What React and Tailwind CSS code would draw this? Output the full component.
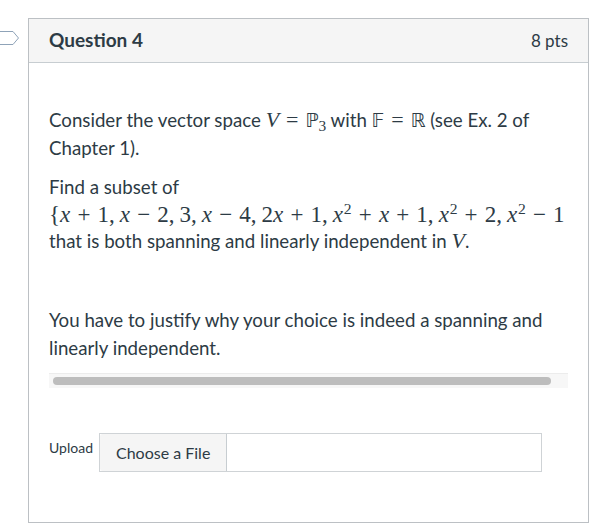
import React from 'react';

// KaTeX-ish pieces
const M = ({ children, className = '' }) => (
  <span className={`font-['Liberation_Serif','DejaVu_Serif',serif] ${className}`}>{children}</span>
);
const I = ({ children }) => <span className="italic">{children}</span>;
const Op = ({ c }) => <span className="mx-[0.31em]">{c}</span>;
const Cm = () => <span className="mr-[0.22em]">,</span>;
const Sq = () => <sup className="text-[0.68em] ml-[0.05em]">2</sup>;
const DS = ({ c }) => <span className="font-['DejaVu_Sans',sans-serif] text-[0.86em]">{c}</span>;

const TagMarker = () => (
  <svg width="20" height="14" viewBox="0 0 20 14" className="mt-[13px] shrink-0">
    <path d="M-2 0.5 H13 L18.5 7 L13 13.5 H-2 Z" fill="#fff" stroke="#8fa3b8" strokeWidth="1" />
  </svg>
);

export default function App() {
  return (
    <div className="w-[605px] h-[525px] bg-white flex items-start pt-[18px] font-['Lato','Noto_Sans',sans-serif] text-[#2d3b45]">
      <TagMarker />
      <div className="ml-[8px] w-[561px] h-[505px] border border-[#bcc0c4] flex flex-col">
        {/* header */}
        <div className="h-[44px] shrink-0 bg-[#f5f5f5] border-b border-[#c7cdd1] flex items-center justify-between px-[20px]">
          <span className="text-[19px] font-bold">Question 4</span>
          <span className="text-[17px]">8 pts</span>
        </div>

        {/* body */}
        <div className="px-[20px] pt-[43px] text-[18.7px] leading-[28px]">
          <p>
            Consider the vector space{' '}
            <M className="text-[22px]">
              <I>V</I>
              <Op c="=" />
              <DS c="ℙ" />
              <sub className="text-[0.7em]">3</sub>
            </M>{' '}
            with{' '}
            <M className="text-[22px]">
              <DS c="𝔽" />
              <Op c="=" />
              <DS c="ℝ" />
            </M>{' '}
            (see Ex. 2 of
            <br />
            Chapter 1).
          </p>

          <div className="mt-[11px]">
            <p>Find a subset of</p>
            {/* wide formula, overflows the content box like the original */}
            <div className="h-[26px] leading-[25px] overflow-hidden whitespace-nowrap text-[23px]">
              <M>
                {'{'}
                <I>x</I>
                <Op c="+" />1<Cm />
                <I>x</I>
                <Op c="−" />2<Cm />3<Cm />
                <I>x</I>
                <Op c="−" />4<Cm />2<I>x</I>
                <Op c="+" />1<Cm />
                <I>x</I>
                <Sq />
                <Op c="+" />
                <I>x</I>
                <Op c="+" />1<Cm />
                <I>x</I>
                <Sq />
                <Op c="+" />2<Cm />
                <I>x</I>
                <Sq />
                <Op c="−" />1<span className="ml-[0.3em]">{'}'}</span>
              </M>
            </div>
            <p>
              that is both spanning and linearly independent in{' '}
              <M className="text-[22px]">
                <I>V</I>
              </M>
              .
            </p>
          </div>

          <p className="mt-[51px]">
            You have to justify why your choice is indeed a spanning and
            <br />
            linearly independent.
          </p>

          {/* horizontal scroll strip */}
          <div className="mt-[11px] h-[15px] bg-[#f7f7f7] border-t border-[#ececec] pt-[3px] pl-[4px]">
            <div className="h-[8px] w-[498px] rounded-full bg-[#bdbdbd]" />
          </div>

          {/* upload */}
          <div className="mt-[45px] flex items-start gap-[6px]">
            <span className="mt-[5px] text-[14px] leading-[20px]">Upload</span>
            <div className="w-[443px] h-[39px] border border-[#cfd3d6] flex">
              <button className="h-full px-[16px] bg-[#f5f5f5] border-r border-[#c7cdd1] rounded-l-[3px] text-[16px] text-[#2d3b45]">
                Choose a File
              </button>
            </div>
          </div>
        </div>
      </div>
    </div>
  );
}
